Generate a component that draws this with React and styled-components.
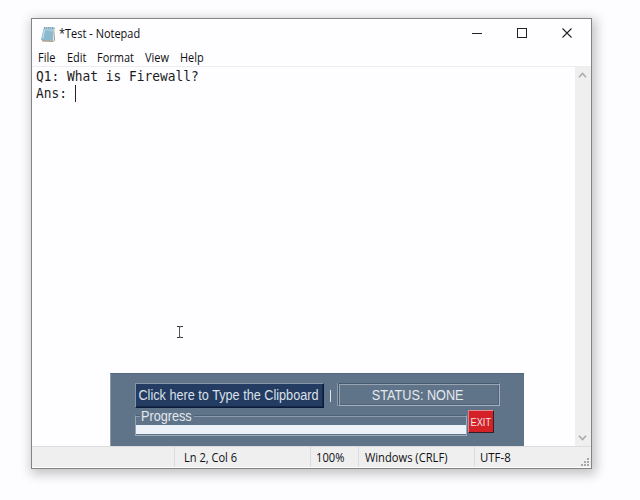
import React from "react";
import styled, { createGlobalStyle } from "styled-components";

const Global = createGlobalStyle`
  * { box-sizing: border-box; }
  body { margin: 0; background: #fdfcfe; overflow: hidden; }
`;

const Desktop = styled.main`
  position: relative;
  width: 640px;
  height: 500px;
  padding: 18px 0 0 31px;
  background: #fdfcfe;
  font-family: "Open Sans", "Noto Sans", sans-serif;
  color: #101010;
`;

const Window = styled.section`
  position: relative;
  width: 561px;
  height: 451px;
  display: flex;
  flex-direction: column;
  border: 1px solid #838383;
  background: #fefdff;
  box-shadow: 2px 3px 11px 2px rgba(0, 0, 0, 0.24);
`;

const TitleBar = styled.header`
  height: 29px;
  flex: none;
  display: flex;
  align-items: center;
  padding-left: 8px;
`;

const AppIcon = styled.svg`
  width: 16px;
  height: 18px;
  margin-right: 3px;
`;

/* Slightly condensed interface lettering */
const Label = styled.span`
  display: block;
  width: max-content;
  font-size: 12px;
  line-height: 16px;
  white-space: pre;
  transform: scaleX(${(p) => p.$scale || 0.93});
  transform-origin: 0 50%;
`;

const WindowControls = styled.div`
  display: flex;
  margin-left: auto;
  padding-right: 1px;
`;

const ControlButton = styled.button`
  width: 45.25px;
  height: 29px;
  display: flex;
  justify-content: center;
  align-items: flex-start;
  padding: 9px 0 0;
  border: 0;
  background: none;
`;

const MenuBar = styled.nav`
  height: 19px;
  flex: none;
  display: flex;
  align-items: center;
  padding: 1px 0 0 6px;
  border-bottom: 1px solid #ededee;
`;

const MenuItem = styled.div`
  width: ${(p) => p.$width}px;
  flex: none;
`;

const Body = styled.div`
  flex: 1;
  display: flex;
  min-height: 0;
`;

const Editor = styled.div`
  flex: 1;
  padding: 1px 0 0 4px;
  font: 13.4px/17px "DejaVu Sans Mono", monospace;
  color: #1c1c1c;
`;

const Line = styled.div`
  display: flex;
  height: 17px;
`;

const LineText = styled.span`
  display: block;
  width: ${(p) => p.$width}px;
  white-space: pre;
  transform: scaleX(0.961);
  transform-origin: 0 50%;
`;

const Caret = styled.i`
  width: 1px;
  height: 17px;
  background: #222;
`;

const ScrollTrack = styled.div`
  width: 16px;
  display: flex;
  flex-direction: column;
  justify-content: space-between;
  align-items: center;
  padding: 5px 1px 5px 0;
  background: #efeff0;
`;

const StatusBar = styled.footer`
  height: 22px;
  flex: none;
  display: flex;
  border-top: 1px solid #dddddf;
  border-bottom: 1px solid #fff;
  background: #efeff0;
`;

const StatusCell = styled.div`
  width: ${(p) => p.$width}px;
  padding: 3px 0 0 ${(p) => p.$pad || 0}px;
  border-left: ${(p) => (p.$first ? "0" : "1px solid #dcdce0")};
`;

const Grip = styled.svg`
  position: absolute;
  right: 1px;
  bottom: 1px;
`;

const Toolbar = styled.section`
  position: absolute;
  left: 110px;
  top: 373px;
  width: 414px;
  height: 73px;
  display: flex;
  flex-direction: column;
  padding: 9px 0 0 25px;
  background: #607489;
  border-top: 1px solid #51687e;
  border-left: 1px solid #8d9bab;
  font-family: "Liberation Sans", Arial, sans-serif;
  color: #e4e9ee;
`;

const ToolRow = styled.div`
  display: flex;
  align-items: flex-start;
  height: ${(p) => p.$height}px;
`;

const ToolText = styled.span`
  display: block;
  font-size: ${(p) => p.$size || 14}px;
  line-height: ${(p) => p.$leading || 20}px;
  white-space: nowrap;
  transform: scaleX(${(p) => p.$scale || 0.905});
  transform-origin: ${(p) => p.$origin || "50% 50%"};
`;

const TypeButton = styled.button`
  width: 189px;
  height: 25px;
  margin-left: -1px;
  padding: 0 2px 2px 0;
  display: flex;
  justify-content: center;
  align-items: center;
  border: 1px solid;
  border-color: #8795a7 #0a1b37 #0a1b37 #8795a7;
  box-shadow: inset -1px -1px #14294b;
  background: #243b62;
  color: #dbe1e8;
  font-family: inherit;
`;

const Divider = styled.i`
  width: 1px;
  height: 12px;
  margin: 7px 7px 0 6px;
  background: #dfe5eb;
`;

const StatusBox = styled.div`
  width: 162px;
  height: 23px;
  display: flex;
  justify-content: center;
  border: 1px solid;
  border-color: #46596e #a4b0bd #a4b0bd #46596e;
  box-shadow: inset 1px 1px #96a4b3, inset -1px -1px #4f6379, -1px 0 #8c9bac;
  padding-right: 2px;
`;

const ProgressFrame = styled.div`
  position: relative;
  width: 332px;
  height: 21px;
  margin: 6px 0 0 -1px;
  padding-top: 9px;
  border: 1px solid;
  border-color: #4d6074 #9eabb8 #9eabb8 #96a4b3;
  box-shadow: inset 0 1px #8b9aaa;
`;

const Legend = styled.span`
  position: absolute;
  left: 4px;
  top: -8px;
  width: 54px;
  height: 17px;
  padding-left: 1px;
  background: #607489;
`;

const ProgressTrack = styled.div`
  height: 9px;
  background: #edf2f9;
`;

const ExitButton = styled.button`
  width: 26px;
  height: 23px;
  margin: 1px 0 0 1px;
  padding: 0;
  display: flex;
  justify-content: center;
  align-items: center;
  border: 1px solid;
  border-color: #e58b91 #351d29 #351d29 #d88186;
  background: #d42027;
  color: #f5e7e9;
  font-family: inherit;
`;

const Pointer = styled.svg`
  position: absolute;
  left: 176px;
  top: 325px;
`;

const menus = [["File", 29], ["Edit", 30], ["Format", 48], ["View", 35], ["Help", 40]];

function Chevron({ down }) {
  return (
    <svg width="9" height="6" viewBox="0 0 9 6" fill="none" stroke="#aaa9ac" strokeWidth="1.5">
      <path d={down ? "M1 .8 4.5 4.6 8 .8" : "M1 5.2 4.5 1.4 8 5.2"} />
    </svg>
  );
}

export default function App() {
  return (
    <Desktop>
      <Global />
      <Window>
        <TitleBar>
          <AppIcon viewBox="0 0 16 18">
            <path d="M4 2.5 15 3v12.5l-2 1.5-11-.5Z" fill="#b39a7f" />
            <path d="M4 2h10.2l-1.5 13.8L1 15Z" fill="#a4cadb" />
            <path d="M3.4 5 13.7 7l-1 8.8L1 15Z" fill="#7eb1c9" opacity=".65" />
            <path d="M4 3h10" stroke="#668496" strokeDasharray="1 1" />
            <path d="m4.5 5-1.7 8.5" stroke="#c5deea" strokeWidth="1.2" />
            <path d="M14.5 4 13.3 16" stroke="#f2eee8" />
          </AppIcon>
          <Label $scale={0.915}>*Test - Notepad</Label>
          <WindowControls>
            <ControlButton aria-label="Minimize"><svg width="10" height="10"><path d="M0 5.5h10" stroke="#222" /></svg></ControlButton>
            <ControlButton aria-label="Maximize"><svg width="10" height="10"><rect x=".5" y=".5" width="9" height="9" fill="none" stroke="#222" /></svg></ControlButton>
            <ControlButton aria-label="Close"><svg width="10" height="10"><path d="m.5.5 9 9m0-9-9 9" stroke="#222" strokeWidth="1.1" /></svg></ControlButton>
          </WindowControls>
        </TitleBar>
        <MenuBar>
          {menus.map(([name, width]) => (
            <MenuItem key={name} $width={width}><Label $scale={0.915}>{name}</Label></MenuItem>
          ))}
        </MenuBar>
        <Body>
          <Editor>
            <Line><LineText $width={170}>Q1: What is Firewall?</LineText></Line>
            <Line><LineText $width={39}>Ans:</LineText><Caret /></Line>
          </Editor>
          <ScrollTrack><Chevron /><Chevron down /></ScrollTrack>
        </Body>
        <StatusBar>
          <StatusCell $first $width={142} />
          <StatusCell $width={136} $pad={9}><Label $scale={0.92}>Ln 2, Col 6</Label></StatusCell>
          <StatusCell $width={48} $pad={5}><Label>100%</Label></StatusCell>
          <StatusCell $width={116} $pad={6}><Label>Windows (CRLF)</Label></StatusCell>
          <StatusCell $width={80} $pad={5}><Label $scale={0.95}>UTF-8</Label></StatusCell>
        </StatusBar>
        <Grip width="9" height="9" fill="#aaa9aa">
          <path d="M6 0h2v2H6zM3 3h2v2H3zM6 3h2v2H6zM0 6h2v2H0zM3 6h2v2H3zM6 6h2v2H6z" />
        </Grip>
      </Window>
      <Toolbar>
        <ToolRow $height={26}>
          <TypeButton><ToolText>Click here to Type the Clipboard</ToolText></TypeButton>
          <Divider />
          <StatusBox><ToolText $leading={22}>STATUS: NONE</ToolText></StatusBox>
        </ToolRow>
        <ToolRow $height={30}>
          <ProgressFrame>
            <Legend><ToolText $leading={17} $origin="0 50%">Progress</ToolText></Legend>
            <ProgressTrack />
          </ProgressFrame>
          <ExitButton><ToolText $size={11.5} $scale={0.8}>EXIT</ToolText></ExitButton>
        </ToolRow>
      </Toolbar>
      <Pointer width="8" height="14" fill="none" stroke="#333">
        <path d="M1 1.5h2l1 .5 1-.5h2M1 12.5h2l1-.5 1 .5h2" />
        <path d="M3.5 2v10" stroke="#555" />
      </Pointer>
    </Desktop>
  );
}
